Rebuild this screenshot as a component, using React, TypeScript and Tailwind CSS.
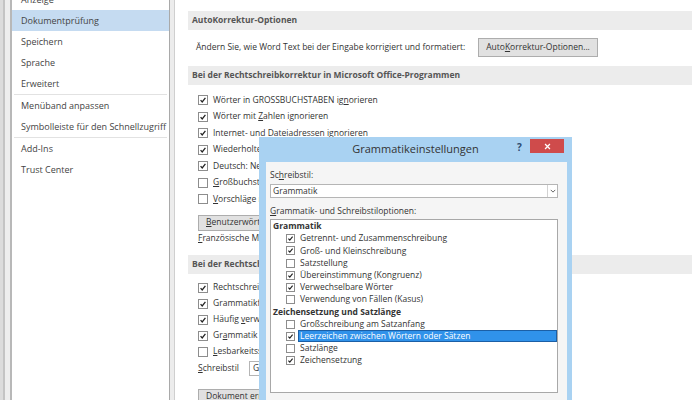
import { ReactNode } from 'react';

// Word-Optionen > Dokumentprüfung mit offenem Dialog "Grammatikeinstellungen"

const FONT = { fontFamily: '"Open Sans", "Noto Sans", sans-serif' };

function U({ children }: { children: ReactNode }) {
  return <span className="underline underline-offset-1">{children}</span>;
}

function Box({ checked, small }: { checked?: boolean; small?: boolean }) {
  const size = small ? 'w-[9px] h-[9px]' : 'w-[10px] h-[10px]';
  return (
    <span className={`${size} shrink-0 border border-[#8d8d8d] bg-white flex items-center justify-center`}>
      {checked && (
        <svg viewBox="0 0 10 10" className="w-full h-full">
          <path d="M2 5.2 L4 7.4 L8 2.4" fill="none" stroke="#222" strokeWidth="1.6" />
        </svg>
      )}
    </span>
  );
}

function Check({ checked, children }: { checked?: boolean; children: ReactNode }) {
  return (
    <div className="h-[16.5px] flex items-center gap-[5px] pl-[10px] whitespace-nowrap">
      <Box checked={checked} />
      <span>{children}</span>
    </div>
  );
}

function Header({ children }: { children: ReactNode }) {
  return (
    <div className="h-[19px] bg-[#ececec] flex items-center pl-[4px] font-bold text-[#555] whitespace-nowrap">
      {children}
    </div>
  );
}

function Btn({ children, className = '' }: { children: ReactNode; className?: string }) {
  return (
    <div className={`border border-[#adadad] bg-[#e1e1e1] flex items-center px-[7px] whitespace-nowrap ${className}`}>
      {children}
    </div>
  );
}

const navItems: (string | null)[] = [
  'Anzeige',
  'Dokumentprüfung',
  'Speichern',
  'Sprache',
  'Erweitert',
  null,
  'Menüband anpassen',
  'Symbolleiste für den Schnellzugriff',
  null,
  'Add-Ins',
  'Trust Center',
];

type Opt = { label: string; checked?: boolean; header?: boolean; selected?: boolean };

const options: Opt[] = [
  { label: 'Grammatik', header: true },
  { label: 'Getrennt- und Zusammenschreibung', checked: true },
  { label: 'Groß- und Kleinschreibung', checked: true },
  { label: 'Satzstellung' },
  { label: 'Übereinstimmung (Kongruenz)', checked: true },
  { label: 'Verwechselbare Wörter', checked: true },
  { label: 'Verwendung von Fällen (Kasus)' },
  { label: 'Zeichensetzung und Satzlänge', header: true },
  { label: 'Großschreibung am Satzanfang' },
  { label: 'Leerzeichen zwischen Wörtern oder Sätzen', checked: true, selected: true },
  { label: 'Satzlänge' },
  { label: 'Zeichensetzung', checked: true },
];

function Dialog() {
  return (
    <div className="absolute left-[259px] top-[137px] w-[313px] h-[280px] bg-[#a9d2f2] flex flex-col">
      <div className="relative h-[25px] flex items-center justify-center text-[11px] text-[#333]">
        Grammatikeinstellungen
        <span className="absolute left-[258px] top-[3px] text-[10px] font-bold text-[#2b4a6f]">?</span>
        <div className="absolute left-[271px] top-[2px] w-[34px] h-[14px] bg-[#cf4b4b] flex items-center justify-center">
          <svg viewBox="0 0 10 10" className="w-[7px] h-[7px]">
            <path d="M1.5 1.5 L8.5 8.5 M8.5 1.5 L1.5 8.5" stroke="#fff" strokeWidth="1.8" />
          </svg>
        </div>
      </div>
      <div className="flex-1 ml-[7px] mr-[5px] bg-[#f5f5f5] pl-[4px] pr-[9px] pt-[6px] text-[8.5px] text-[#333]">
        <div className="h-[14px] flex items-center">
          Sc<U>h</U>reibstil:
        </div>
        <div className="mt-[2px] h-[14px] bg-white border border-[#b5b5b5] flex items-center justify-between pl-[2px]">
          <span>Grammatik</span>
          <span className="w-[10px] h-[12px] border-l border-[#d2d2d2] flex items-center justify-center">
            <svg viewBox="0 0 8 8" className="w-[6px] h-[6px]">
              <path d="M1 2.5 L4 5.5 L7 2.5" fill="none" stroke="#555" strokeWidth="1.2" />
            </svg>
          </span>
        </div>
        <div className="mt-[6px] h-[14px] flex items-center">
          <U>G</U>rammatik- und Schreibstiloptionen:
        </div>
        <div className="mt-[1px] h-[174px] bg-white border border-[#a8a8a8] pt-[0.5px]">
          {options.map((o) =>
            o.header ? (
              <div key={o.label} className="h-[12.2px] flex items-center pl-[2px] font-bold">
                {o.label}
              </div>
            ) : (
              <div key={o.label} className="h-[12.2px] flex items-center pl-[15px] gap-[3px]">
                <Box checked={o.checked} small />
                <span
                  className={
                    o.selected
                      ? 'flex-1 h-full flex items-center bg-[#3092ea] text-white pl-[1px] border border-[#1b5fa6]'
                      : 'pl-[2px]'
                  }
                >
                  {o.label}
                </span>
              </div>
            )
          )}
        </div>
      </div>
    </div>
  );
}

export default function App() {
  return (
    <div style={FONT} className="relative w-[700px] h-[400px] overflow-hidden bg-white flex">
      {/* linker Fensterrahmen */}
      <div className="w-[12px] flex">
        <div className="w-[3px] bg-[#dcdcdc]" />
        <div className="w-[2px] bg-[#c4c4c4]" />
        <div className="w-[5px] bg-[#eeeeee]" />
        <div className="w-[2px] bg-[#b8b8b8]" />
      </div>

      {/* Navigation */}
      <div className="w-[157px] bg-white text-[9px] text-[#444] -mt-[11px]">
        {navItems.map((item, i) =>
          item === null ? (
            <div key={i} className="h-[1px] bg-[#e2e2e2] mx-[2px]" />
          ) : (
            <div
              key={i}
              className={`h-[21px] flex items-center pl-[9px] whitespace-nowrap ${
                item === 'Dokumentprüfung' ? 'bg-[#c5dbf1]' : ''
              }`}
            >
              {item}
            </div>
          )
        )}
      </div>

      {/* Trenner */}
      <div className="w-[9px] flex">
        <div className="w-[1px] bg-[#a9a9a9]" />
        <div className="w-[4px] bg-[#ececec]" />
        <div className="w-[1px] bg-[#cfcfcf]" />
        <div className="w-[3px] bg-white" />
      </div>

      {/* Inhalt */}
      <div className="flex-1 pl-[10px] pr-[8px] text-[8.5px] text-[#333]">
        <div className="mt-[11px]">
          <Header>AutoKorrektur-Optionen</Header>
        </div>
        <div className="mt-[8px] h-[19px] flex items-center pl-[8px]">
          <span className="w-[282px] whitespace-nowrap">
            Ändern Sie, wie Word Text bei der Eingabe korrigiert und formatiert:
          </span>
          <Btn className="h-[19px] w-[120px] justify-center">
            Auto<U>K</U>orrektur-Optionen...
          </Btn>
        </div>
        <div className="mt-[9px]">
          <Header>Bei der Rechtschreibkorrektur in Microsoft Office-Programmen</Header>
        </div>
        <div className="mt-[7px]">
          <Check checked>
            Wörter in GROSSBUCHSTABEN ig<U>n</U>orieren
          </Check>
          <Check checked>
            Wörter mit <U>Z</U>ahlen ignorieren
          </Check>
          <Check checked>
            Internet- und Dateiadressen ign<U>o</U>rieren
          </Check>
          <Check checked>Wiederholte Wörter kennzeichnen</Check>
          <Check checked>Deutsch: Neue Rechtschreibung verwenden</Check>
          <Check>
            <U>G</U>roßbuchstaben mit Akzent im Französischen
          </Check>
          <Check>
            <U>V</U>orschläge nur aus Hauptwörterbuch
          </Check>
        </div>
        <div className="mt-[7px] pl-[10px]">
          <Btn className="h-[16px] w-[110px]">
            <U>B</U>enutzerwörterbücher...
          </Btn>
        </div>
        <div className="h-[16px] flex items-center pl-[10px] whitespace-nowrap">
          <U>F</U>ranzösische Modi:
        </div>
        <div className="mt-[8px]">
          <Header>Bei der Rechtschreib- und Grammatikkorrektur in Word</Header>
        </div>
        <div className="mt-[6px] [&>div]:h-[16px]">
          <Check checked>Rechtschreibung während der Eingabe überprüfen</Check>
          <Check checked>Grammatikfehler während der Eingabe markieren</Check>
          <Check checked>
            Häufig <U>v</U>erwechselte Wörter
          </Check>
          <Check checked>
            Gr<U>a</U>mmatik zusammen mit Rechtschreibung prüfen
          </Check>
          <Check>
            <U>L</U>esbarkeitsstatistik anzeigen
          </Check>
        </div>
        <div className="mt-[1px] h-[15px] flex items-center pl-[10px] gap-[10px]">
          <span>
            <U>S</U>chreibstil
          </span>
          <div className="h-[15px] w-[120px] border border-[#b5b5b5] bg-white flex items-center pl-[3px]">
            Grammatik
          </div>
        </div>
        <div className="mt-[13px] pl-[10px]">
          <Btn className="h-[16px] w-[100px]">Dokument erneut prüfen</Btn>
        </div>
      </div>

      <Dialog />
    </div>
  );
}
